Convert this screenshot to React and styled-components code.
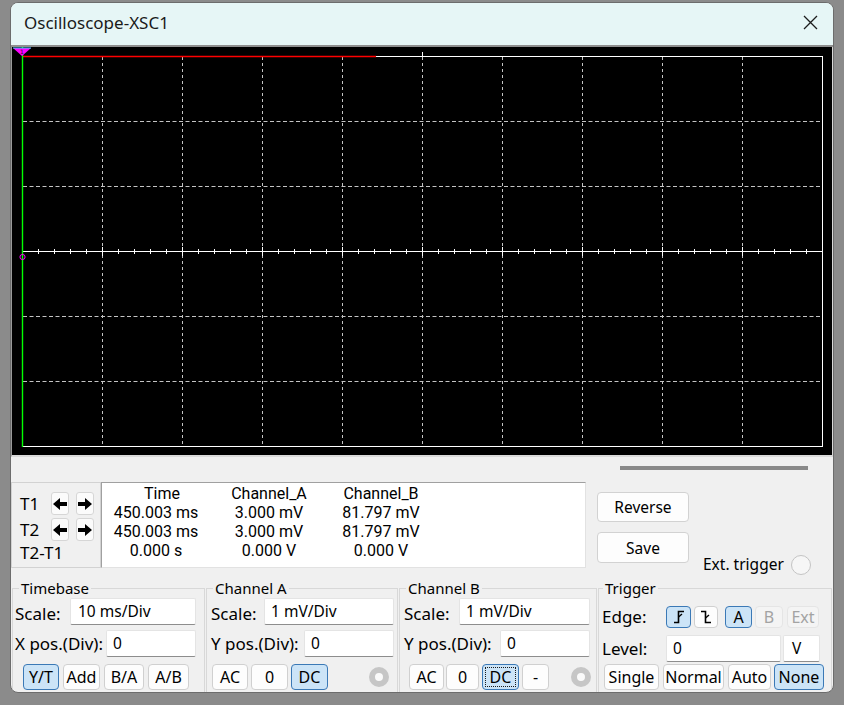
import React from 'react';
import styled, { createGlobalStyle } from 'styled-components';

const Global = createGlobalStyle`
  html, body { margin: 0; padding: 0; background: #8b8b8b; }
  body { width: 844px; height: 705px; overflow: hidden; font-family: "Noto Sans", "Segoe UI", sans-serif; }
  * { box-sizing: border-box; }
`;

const Desktop = styled.div`
  width: 844px;
  height: 705px;
  padding: 2px 10px 0 10px;
`;

const Win = styled.div`
  width: 824px;
  height: 691px;
  border: 1px solid #6c6c6c;
  border-radius: 8px;
  background: #f0f0f0;
  overflow: hidden;
  display: flex;
  flex-direction: column;
`;

const TitleBar = styled.div`
  height: 44px;
  flex: none;
  background: #e6f6f6;
  border-bottom: 2px solid #8e8e8e;
  display: flex;
  align-items: center;
  justify-content: space-between;
  padding: 0 15px 4px 13px;
`;

const Title = styled.span`
  font-size: 17px;
  color: #1a1a1a;
`;

const ScopeFrame = styled.div`
  flex: none;
  height: 410px;
  background: #000;
  border-left: 1px solid #9a9a9a;
  border-right: 1px solid #d8d8d8;
  border-bottom: 2px solid #dadada;
`;

const Panel = styled.div`
  flex: 1;
  display: flex;
  flex-direction: column;
  min-height: 0;
`;

const ScrollRow = styled.div`
  height: 25px;
  flex: none;
  display: flex;
  justify-content: flex-end;
  padding: 9px 25px 0 0;
`;

const ScrollThumb = styled.div`
  width: 188px;
  height: 4px;
  background: #898989;
`;

const CursorRow = styled.div`
  height: 86px;
  flex: none;
  display: flex;
  align-items: flex-start;
`;

const TBox = styled.div`
  width: 90px;
  height: 86px;
  border: 1px solid #d2d2d2;
  padding: 9px 0 0 8px;
  display: flex;
  flex-direction: column;
  gap: 3px;
`;

const TRow = styled.div`
  height: ${p => p.$h || 23}px;
  display: flex;
  align-items: center;
`;

const TLabel = styled.span`
  font-size: 17px;
  width: 31px;
  flex: none;
  color: #000;
  line-height: 1;
  white-space: nowrap;
`;

const ArrowBtn = styled.div`
  width: 18px;
  height: 23px;
  margin-left: ${p => p.$ml || 0}px;
  background: #fbfbfb;
  border: 1px solid #d6d6d6;
  border-radius: 3px;
  display: flex;
  align-items: center;
  justify-content: center;
`;

const DataBox = styled.div`
  width: 485px;
  height: 86px;
  background: #fff;
  border-top: 1px solid #a0a0a0;
  border-left: 1px solid #a0a0a0;
  border-right: 1px solid #e2e2e2;
  border-bottom: 1px solid #e2e2e2;
  padding-top: 1px;
  display: grid;
  grid-template-columns: 108px 118px 106px 1fr;
  grid-auto-rows: 19px;
  align-content: start;
`;

const Cell = styled.div`
  font-family: Roboto, "Noto Sans", sans-serif;
  font-size: 16px;
  line-height: 19px;
  text-align: center;
  color: #000;
  padding-left: ${p => p.$pl || 0}px;
  white-space: nowrap;
`;

const SideButtons = styled.div`
  margin-left: 11px;
  padding-top: 10px;
  display: flex;
  flex-direction: column;
  gap: 10px;
`;

const PlainBtn = styled.div`
  width: 92px;
  height: ${p => p.$h}px;
  background: #fdfdfd;
  border: 1px solid #d2d2d2;
  border-radius: 4px;
  font-size: 15.5px;
  color: #000;
  display: flex;
  align-items: center;
  justify-content: center;
`;

const ExtTrigger = styled.div`
  margin: 73px 0 0 14px;
  height: 20px;
  display: flex;
  align-items: center;
  gap: 7px;
  font-size: 15.5px;
  color: #000;
  padding-bottom: 2px;
`;

const RadioCircle = styled.div`
  width: 20px;
  height: 20px;
  border-radius: 50%;
  background: #f6f6f6;
  border: 1px solid #c4c4c4;
  margin-top: 2px;
`;

const GroupsRow = styled.div`
  flex: 1;
  display: flex;
  gap: 1px;
  padding-left: 1px;
  margin-top: 12px;
  min-height: 0;
`;

const Group = styled.fieldset`
  width: ${p => p.$w}px;
  margin: 0;
  padding: 0;
  min-width: 0;
  border: 1px solid #d8d8d8;
  border-bottom: none;
`;

const Legend = styled.legend`
  font-size: 15px;
  line-height: 16px;
  color: #000;
  padding: 0 2px;
  margin-left: ${p => p.$ml || 6}px;
`;

const GroupBody = styled.div`
  padding: 2px 0 0 ${p => p.$pl}px;
  display: flex;
  flex-direction: column;
`;

const Row = styled.div`
  display: flex;
  align-items: center;
  margin-top: ${p => p.$mt || 0}px;
  padding-left: ${p => p.$pl || 0}px;
  padding-top: ${p => p.$pt || 0}px;
`;

const Label = styled.span`
  width: ${p => p.$w}px;
  flex: none;
  font-size: 17px;
  color: #000;
  white-space: nowrap;
  padding-top: ${p => p.$pt || 0}px;
`;

const Field = styled.div`
  width: ${p => p.$w}px;
  height: 27px;
  margin-left: ${p => p.$ml || 0}px;
  background: #fff;
  border: 1px solid #e4e4e4;
  border-bottom: 1px solid #8d8d8d;
  border-radius: 2px;
  padding-left: ${p => p.$pl || 6}px;
  font-size: 15.5px;
  line-height: 25px;
  color: #000;
`;

const Btn = styled.div`
  position: relative;
  width: ${p => p.$w}px;
  height: ${p => p.$h || 26}px;
  margin-left: ${p => p.$ml || 0}px;
  background: ${p => (p.$on ? '#cce4f7' : p.$off ? '#f4f4f4' : '#fdfdfd')};
  border: 1px solid ${p => (p.$on ? '#3b79b6' : p.$off ? '#e5e5e5' : '#d0d0d0')};
  border-radius: 4px;
  color: ${p => (p.$off ? '#a3a3a3' : '#000')};
  font-size: 16px;
  display: flex;
  align-items: center;
  justify-content: center;
  flex: none;
  &::after {
    content: '';
    display: ${p => (p.$focus ? 'block' : 'none')};
    position: absolute;
    inset: 2px;
    border: 1px dotted #1a1a1a;
  }
`;

const Ring = styled.div`
  width: 20px;
  height: 20px;
  margin-left: ${p => p.$ml}px;
  border-radius: 50%;
  border: 6px solid #c6c6c6;
  background: #fafafa;
  flex: none;
`;

function CloseIcon() {
  return (
    <svg width="15" height="15" viewBox="0 0 15 15">
      <path d="M1 1 L14 14 M14 1 L1 14" stroke="#1c1c1c" strokeWidth="1.3" fill="none" />
    </svg>
  );
}

function Arrow({ dir }) {
  const d = dir === 'left'
    ? 'M0 6 L7 0 L7 4 L14 4 L14 8 L7 8 L7 12 Z'
    : 'M14 6 L7 0 L7 4 L0 4 L0 8 L7 8 L7 12 Z';
  return (
    <svg width="14" height="12" viewBox="0 0 14 12">
      <path d={d} fill="#000" />
    </svg>
  );
}

function EdgeIcon({ falling }) {
  return falling ? (
    <svg width="12" height="14" viewBox="0 0 12 14">
      <path d="M1 1.5 H5.5 V12.5 H11" stroke="#000" strokeWidth="1.6" fill="none" />
      <path d="M5.5 8 L9 5" stroke="#000" strokeWidth="1.4" fill="none" />
    </svg>
  ) : (
    <svg width="12" height="14" viewBox="0 0 12 14">
      <path d="M1 12.5 H5.5 V1.5 H11" stroke="#000" strokeWidth="1.6" fill="none" />
      <path d="M5.5 7 L9 4" stroke="#000" strokeWidth="1.4" fill="none" />
    </svg>
  );
}

function Scope() {
  const vs = [1, 2, 3, 4, 5, 6, 7, 8, 9].map(k => 10.5 + 80 * k);
  const hs = [1, 2, 4, 5].map(k => 9.5 + 65 * k);
  const ticks = Array.from({ length: 49 }, (_, j) => 10.5 + 16 * (j + 1));
  return (
    <svg width="820" height="408" viewBox="0 0 820 408" style={{ display: 'block' }}>
      <rect width="820" height="408" fill="#000" />
      {vs.map(x => (
        <line key={'v' + x} x1={x} x2={x} y1={10} y2={399} stroke="#c4c4c4" strokeDasharray="3 3" />
      ))}
      {hs.map(y => (
        <line key={'h' + y} x1={11} x2={810} y1={y} y2={y} stroke="#c4c4c4" strokeDasharray="4 2.5" />
      ))}
      <rect x="10.5" y="9.5" width="800" height="390" fill="none" stroke="#fff" />
      <line x1="10" x2="811" y1="204.5" y2="204.5" stroke="#fff" />
      {ticks.map((x, j) => {
        const big = (j + 1) % 5 === 0;
        return <line key={'t' + x} x1={x} x2={x} y1={big ? 200 : 202} y2={big ? 209 : 207} stroke="#fff" />;
      })}
      <line x1="410.5" x2="410.5" y1="5" y2="10" stroke="#fff" />
      <line x1="10" x2="364" y1="9.5" y2="9.5" stroke="#ff0000" strokeWidth="1.3" />
      <line x1="10.5" x2="10.5" y1="0" y2="400" stroke="#00ff00" strokeWidth="1.4" />
      <circle cx="10.5" cy="210" r="2.6" fill="none" stroke="#ff00ff" />
      <polygon points="1,1 19,1 10,9" fill="#ff00ff" />
      <line x1="1" y1="1" x2="19" y2="1" stroke="#40cfff" />
      <text x="10" y="6.5" fontSize="6" textAnchor="middle" fill="#222" fontFamily="DejaVu Sans, sans-serif">1</text>
    </svg>
  );
}

export default function App() {
  return (
    <>
      <Global />
      <Desktop>
        <Win>
          <TitleBar>
            <Title>Oscilloscope-XSC1</Title>
            <CloseIcon />
          </TitleBar>
          <ScopeFrame>
            <Scope />
          </ScopeFrame>
          <Panel>
            <ScrollRow>
              <ScrollThumb />
            </ScrollRow>
            <CursorRow>
              <TBox>
                <TRow>
                  <TLabel>T1</TLabel>
                  <ArrowBtn><Arrow dir="left" /></ArrowBtn>
                  <ArrowBtn $ml={7}><Arrow dir="right" /></ArrowBtn>
                </TRow>
                <TRow>
                  <TLabel>T2</TLabel>
                  <ArrowBtn><Arrow dir="left" /></ArrowBtn>
                  <ArrowBtn $ml={7}><Arrow dir="right" /></ArrowBtn>
                </TRow>
                <TRow $h={17}>
                  <TLabel>T2-T1</TLabel>
                </TRow>
              </TBox>
              <DataBox>
                <Cell $pl={12}>Time</Cell>
                <Cell>Channel_A</Cell>
                <Cell>Channel_B</Cell>
                <Cell />
                <Cell>450.003 ms</Cell>
                <Cell>3.000 mV</Cell>
                <Cell>81.797 mV</Cell>
                <Cell />
                <Cell>450.003 ms</Cell>
                <Cell>3.000 mV</Cell>
                <Cell>81.797 mV</Cell>
                <Cell />
                <Cell>0.000 s</Cell>
                <Cell>0.000 V</Cell>
                <Cell>0.000 V</Cell>
                <Cell />
              </DataBox>
              <SideButtons>
                <PlainBtn $h={30}>Reverse</PlainBtn>
                <PlainBtn $h={31}>Save</PlainBtn>
              </SideButtons>
              <ExtTrigger>
                Ext. trigger
                <RadioCircle />
              </ExtTrigger>
            </CursorRow>
            <GroupsRow>
              <Group $w={193}>
                <Legend>Timebase</Legend>
                <GroupBody $pl={2}>
                  <Row>
                    <Label $w={55} $pt={4}>Scale:</Label>
                    <Field $w={126} $pl={7}>10 ms/Div</Field>
                  </Row>
                  <Row $mt={5}>
                    <Label $w={91}>X pos.(Div):</Label>
                    <Field $w={90}>0</Field>
                  </Row>
                  <Row $mt={7} $pl={8}>
                    <Btn $w={36} $on>Y/T</Btn>
                    <Btn $w={37} $ml={4}>Add</Btn>
                    <Btn $w={40} $ml={4}>B/A</Btn>
                    <Btn $w={41} $ml={4}>A/B</Btn>
                  </Row>
                </GroupBody>
              </Group>
              <Group $w={192}>
                <Legend>Channel A</Legend>
                <GroupBody $pl={4}>
                  <Row>
                    <Label $w={53} $pt={4}>Scale:</Label>
                    <Field $w={130}>1 mV/Div</Field>
                  </Row>
                  <Row $mt={5}>
                    <Label $w={93}>Y pos.(Div):</Label>
                    <Field $w={90}>0</Field>
                  </Row>
                  <Row $mt={7} $pl={1}>
                    <Btn $w={36}>AC</Btn>
                    <Btn $w={37} $ml={3}>0</Btn>
                    <Btn $w={37} $ml={3} $on>DC</Btn>
                    <Ring $ml={41} />
                  </Row>
                </GroupBody>
              </Group>
              <Group $w={198}>
                <Legend $ml={6}>Channel B</Legend>
                <GroupBody $pl={4}>
                  <Row>
                    <Label $w={55} $pt={4}>Scale:</Label>
                    <Field $w={131}>1 mV/Div</Field>
                  </Row>
                  <Row $mt={5}>
                    <Label $w={96}>Y pos.(Div):</Label>
                    <Field $w={90}>0</Field>
                  </Row>
                  <Row $mt={7} $pl={5}>
                    <Btn $w={35}>AC</Btn>
                    <Btn $w={33} $ml={2}>0</Btn>
                    <Btn $w={37} $ml={3} $on $focus>DC</Btn>
                    <Btn $w={27} $ml={3}>-</Btn>
                    <Ring $ml={22} />
                  </Row>
                </GroupBody>
              </Group>
              <Group $w={234}>
                <Legend $ml={4}>Trigger</Legend>
                <GroupBody $pl={3}>
                  <Row $pt={7}>
                    <Label $w={64}>Edge:</Label>
                    <Btn $w={25} $h={22} $on><EdgeIcon /></Btn>
                    <Btn $w={24} $h={22} $ml={3}><EdgeIcon falling /></Btn>
                    <Btn $w={27} $h={22} $ml={7} $on>A</Btn>
                    <Btn $w={28} $h={22} $ml={3} $off>B</Btn>
                    <Btn $w={32} $h={22} $ml={4} $off>Ext</Btn>
                  </Row>
                  <Row $mt={7}>
                    <Label $w={64}>Level:</Label>
                    <Field $w={115}>0</Field>
                    <Field $w={37} $ml={2} $pl={8}>V</Field>
                  </Row>
                  <Row $mt={2} $pl={2}>
                    <Btn $w={55}>Single</Btn>
                    <Btn $w={61} $ml={4}>Normal</Btn>
                    <Btn $w={43} $ml={4}>Auto</Btn>
                    <Btn $w={50} $ml={3} $on>None</Btn>
                  </Row>
                </GroupBody>
              </Group>
            </GroupsRow>
          </Panel>
        </Win>
      </Desktop>
    </>
  );
}
